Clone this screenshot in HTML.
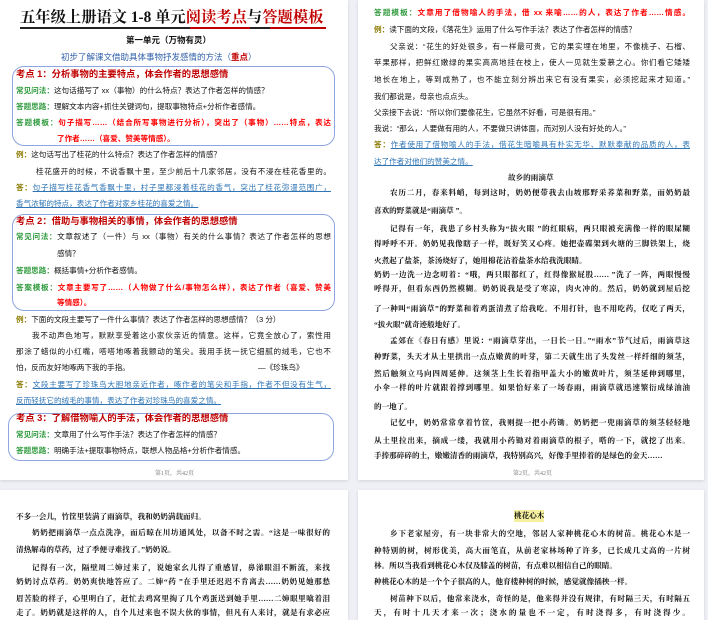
<!DOCTYPE html>
<html><head><meta charset="utf-8">
<style>
*{margin:0;padding:0;box-sizing:border-box}
body{width:708px;height:616px;background:#eef0f5;position:relative;overflow:hidden;font-family:"Liberation Sans","Noto Sans CJK SC",sans-serif;font-size:7.6px;color:#111}
.pg{position:absolute;background:#fff;box-shadow:0 1px 3px rgba(0,0,0,.12)}
.l{position:absolute;white-space:nowrap;line-height:12px;height:12px}
.j{text-align:justify;text-align-last:justify;overflow:hidden}
.g{color:#2e9a3c;font-weight:bold}
.r{color:#ff0000;font-weight:bold}
.dr{color:#c00000;font-weight:bold}
.b{color:#2f75b5;text-decoration:underline}
.y{color:#8a7a00;font-weight:bold}
.box{position:absolute;border:1px solid #8ea6e0;border-radius:12px}
.ft{position:absolute;font-size:6px;color:#777;font-family:"Liberation Serif","Noto Serif CJK SC",serif}
.k{font-family:"Liberation Serif","Noto Serif CJK SC",serif;font-weight:bold;font-size:7.6px}
.h{font-size:9.3px}
</style></head><body>
<div class="pg" style="left:0;top:0;width:348px;height:480px"></div>
<div class="pg" style="top:0;width:346px;height:480px;left:358px"></div>
<div class="pg" style="left:0;top:490px;width:348px;height:130px"></div>
<div class="pg" style="left:358px;top:490px;width:346px;height:130px"></div>

<!-- Page 1 -->
<div class="l" style="left:20px;top:8px;height:20px;line-height:20px;font-size:15.3px;font-weight:bold;font-family:'Liberation Serif','Noto Serif CJK SC',serif">五年级上册语文 1-8 单元<span style="color:#c00000">阅读考点</span>与<span style="color:#c00000">答题模板</span></div>
<div style="position:absolute;left:20px;top:27px;width:306px;height:2px;background:linear-gradient(90deg,#222 0 170px,#c00000 170px 230px,#222 230px 250px,#c00000 250px)"></div>
<div class="l" style="left:126px;top:34px;font-weight:bold;font-size:8.5px">第一单元（万物有灵）</div>
<div class="l" style="left:61px;top:51px;color:#2e5fa8;font-size:8.5px">初步了解课文借助具体事物抒发感情的方法（<span class="dr">重点</span>）</div>

<div class="box" style="left:12px;top:66px;width:323px;height:80px"></div>
<div class="l dr h" style="left:16px;top:68px">考点 1：分析事物的主要特点，体会作者的思想感情</div>
<div class="l" style="left:16px;top:85px"><span class="g">常见问法：</span>这句话描写了 xx（事物）的什么特点？表达了作者怎样的情感？</div>
<div class="l" style="left:16px;top:101px"><span class="g">答题思路：</span>理解文本内容+抓住关键词句，提取事物特点+分析作者感情。</div>
<div class="l j" style="left:16px;top:117px;width:315px"><span class="g">答题模板：</span><span class="r">句子描写……（结合所写事物进行分析），突出了（事物）……特点，表达</span></div>
<div class="l r" style="left:57px;top:133px">了作者……（喜爱、赞美等情感）。</div>

<div class="l" style="left:16px;top:149px"><span class="y">例：</span>这句话写出了桂花的什么特点？表达了作者怎样的情感？</div>
<div class="l j" style="left:36px;top:166px;width:295px">桂花盛开的时候，不说香飘十里，至少前后十几家邻居，没有不浸在桂花香里的。</div>
<div class="l j" style="left:16px;top:182px;width:315px"><span class="y">答：</span><span class="b">句子描写桂花香气香飘十里，村子里都浸着桂花的香气，突出了桂花弥漫范围广，</span></div>
<div class="l b" style="left:16px;top:198px">香气浓郁的特点，表达了作者对家乡桂花的喜爱之情。</div>

<div class="box" style="left:12px;top:214px;width:323px;height:97px"></div>
<div class="l dr h" style="left:16px;top:215px">考点 2：借助与事物相关的事情，体会作者的思想感情</div>
<div class="l j" style="left:16px;top:231px;width:315px"><span class="g">常见问法：</span>文章叙述了（一件）与 xx（事物）有关的什么事情？表达了作者怎样的思想</div>
<div class="l" style="left:57px;top:248px">感情？</div>
<div class="l" style="left:16px;top:265px"><span class="g">答题思路：</span>概括事情+分析作者感情。</div>
<div class="l j" style="left:16px;top:282px;width:315px"><span class="g">答案模板：</span><span class="r">文章主要写了……（人物做了什么/事物怎么样），表达了作者（喜爱、赞美</span></div>
<div class="l r" style="left:57px;top:297px">等情感）。</div>

<div class="l" style="left:16px;top:314px"><span class="y">例：</span>下面的文段主要写了一件什么事情？表达了作者怎样的思想感情？（3 分）</div>
<div class="l j" style="left:32px;top:330px;width:299px">我不动声色地写，默默享受着这小家伙亲近的情意。这样，它竟全放心了，索性用</div>
<div class="l j" style="left:16px;top:346px;width:315px">那涂了蜡似的小红嘴，嗒嗒地啄着我颤动的笔尖。我用手抚一抚它细腻的绒毛，它也不</div>
<div class="l" style="left:16px;top:362px">怕，反而友好地啄两下我的手指。</div>
<div class="l" style="left:258px;top:362px">—《珍珠鸟》</div>
<div class="l j" style="left:16px;top:379px;width:315px"><span class="y">答：</span><span class="b">文段主要写了珍珠鸟大胆地亲近作者，啄作者的笔尖和手指，作者不但没有生气，</span></div>
<div class="l b" style="left:16px;top:395px">反而轻抚它的绒毛的事情，表达了作者对珍珠鸟的喜爱之情。</div>

<div class="box" style="left:8px;top:413px;width:326px;height:48px"></div>
<div class="l dr h" style="left:16px;top:412px">考点 3：了解借物喻人的手法，体会作者的思想感情</div>
<div class="l" style="left:16px;top:429px"><span class="g">常见问法：</span>文章用了什么写作手法？表达了作者怎样的情感？</div>
<div class="l" style="left:16px;top:445px"><span class="g">答题思路：</span>明确手法+提取事物特点，联想人物品格+分析作者情感。</div>
<div class="ft" style="left:155px;top:468px">第1页，共42页</div>

<!-- Page 2 -->
<div class="l j" style="left:374px;top:7px;width:316px"><span class="g">答题模板：</span><span class="r">文章用了借物喻人的手法，借 xx 来喻……的人，表达了作者……情感。</span></div>
<div class="l" style="left:374px;top:24px"><span class="y">例：</span>读下面的文段，《落花生》运用了什么写作手法？表达了作者怎样的情感？</div>
<div class="l j" style="left:390px;top:41px;width:300px">父亲说：“花生的好处很多，有一样最可贵，它的果实埋在地里，不像桃子、石榴、</div>
<div class="l j" style="left:374px;top:57px;width:316px">苹果那样，把鲜红嫩绿的果实高高地挂在枝上，使人一见就生爱慕之心。你们看它矮矮</div>
<div class="l j" style="left:374px;top:74px;width:316px">地长在地上，等到成熟了，也不能立刻分辨出来它有没有果实，必须挖起来才知道。”</div>
<div class="l" style="left:374px;top:91px">我们都说是，母亲也点点头。</div>
<div class="l" style="left:374px;top:107px">父亲接下去说：“所以你们要像花生，它虽然不好看，可是很有用。”</div>
<div class="l" style="left:374px;top:123px">我说：“那么，人要做有用的人，不要做只讲体面，而对别人没有好处的人。”</div>
<div class="l j" style="left:374px;top:139px;width:316px"><span class="y">答：</span><span class="b">作者使用了借物喻人的手法，借花生暗喻具有朴实无华、默默奉献的品质的人，表</span></div>
<div class="l b" style="left:374px;top:156px">达了作者对他们的赞美之情。</div>

<div class="l k" style="left:508px;top:172px">故乡的雨滴草</div>
<div class="l k j" style="left:390px;top:187px;width:300px">农历二月，春来料峭，每到这时，奶奶便带我去山坡邢野采荞菜和野菜，而奶奶最</div>
<div class="l k" style="left:374px;top:205px">喜欢的野菜就是“雨滴草 ”。</div>
<div class="l k j" style="left:390px;top:223px;width:300px">记得有一年，我患了乡村头称为“拔火眼 ”的红眼病，两只眼被充满像一样的眼屎糊</div>
<div class="l k j" style="left:374px;top:238px;width:316px">得呼呼不开。奶奶见我像瞎子一样，既好笑又心疼。她把壶碟架到火塘的三脚铁架上，烧</div>
<div class="l k" style="left:374px;top:255px">火煮起了盐茶，茶汤烧好了，她用棉花沾着盐茶水给我洗眼睛。</div>
<div class="l k j" style="left:374px;top:269px;width:316px">奶奶一边洗一边念叨着：“哦，两只眼都红了，红得像猴屁股…… ”洗了一阵，两眼慢慢</div>
<div class="l k j" style="left:374px;top:283px;width:316px">呼得开，但看东西仍然模糊。奶奶说我是受了寒凉，肉火冲的。然后，奶奶就到屋后挖</div>
<div class="l k j" style="left:374px;top:303px;width:316px">了一种叫“雨滴草”的野菜和着鸡蛋清煮了给我吃。不用打针，也不用吃药，仅吃了两天，</div>
<div class="l k" style="left:374px;top:319px">“拔火眼”就奇迹般地好了。</div>
<div class="l k j" style="left:390px;top:335px;width:300px">孟郊在《春日有感》里说：“雨滴草芽出，一日长一日。”“雨水”节气过后，雨滴草这</div>
<div class="l k j" style="left:374px;top:351px;width:316px">种野菜，头天才从土里拱出一点点嫩黄的叶芽，第二天就生出了头发丝一样纤细的须茎，</div>
<div class="l k j" style="left:374px;top:368px;width:316px">然后触须立马向四周延伸。这须茎上生长着指甲盖大小的嫩黄叶片，须茎延伸到哪里，</div>
<div class="l k j" style="left:374px;top:382px;width:316px">小伞一样的叶片就跟着撑到哪里。如果恰好来了一场春雨，雨滴草就迅速繁衍成绿油油</div>
<div class="l k" style="left:374px;top:401px">的一地了。</div>
<div class="l k j" style="left:390px;top:417px;width:300px">记忆中，奶奶常常拿着竹筐，我则提一把小药锄。奶奶把一兜雨滴草的须茎轻轻地</div>
<div class="l k j" style="left:374px;top:435px;width:316px">从土里拉出来，摘成一缕，我就用小药锄对着雨滴草的根子，嗒的一下，就挖了出来。</div>
<div class="l k" style="left:374px;top:450px">手捧那碎碎的土，嫩嫩清香的雨滴草，我特别高兴，好像手里捧着的是绿色的金天……</div>
<div class="ft" style="left:513px;top:468px">第2页，共42页</div>

<!-- Page 3 -->
<div class="l k" style="left:16px;top:511px">不多一会儿，竹筐里装满了雨滴草，我和奶奶满载而归。</div>
<div class="l k j" style="left:32px;top:527px;width:298px">奶奶把雨滴草一点点洗净，而后晾在川坊通风处，以备不时之需。“这是一味很好的</div>
<div class="l k" style="left:16px;top:544px">清热解毒的草药，过了季便寻难找了。”奶奶说。</div>
<div class="l k j" style="left:32px;top:562px;width:298px">记得有一次，隔壁周二婶过来了，说她家幺儿得了重感冒，鼻涕眼泪不断流，来找</div>
<div class="l k j" style="left:16px;top:576px;width:314px">奶奶讨点草药。奶奶爽快地答应了。二婶“药 ”在手里还迟迟不肯离去……奶奶见她那愁</div>
<div class="l k j" style="left:16px;top:593px;width:314px">眉苦脸的样子，心里明白了，赶忙去鸡窝里掏了几个鸡蛋送到她手里……二婶眼里噙着泪</div>
<div class="l k j" style="left:16px;top:607px;width:314px">走了。奶奶就是这样的人，自个儿过来也不误大伙的事情，但凡有人来讨，就是有求必应</div>

<!-- Page 4 -->
<div class="l k" style="left:514px;top:510px;background:#f5f0a0">桃花心木</div>
<div class="l k j" style="left:390px;top:528px;width:300px">乡下老家屋旁，有一块非常大的空地，邻居人家种桃花心木的树苗。桃花心木是一</div>
<div class="l k j" style="left:374px;top:545px;width:316px">种特别的树，树形优美，高大而笔直，从前老家林场种了许多，已长成几丈高的一片树</div>
<div class="l k" style="left:374px;top:560px">林。所以当我看到桃花心木仅及膝盖的树苗，有点难以相信自己的眼睛。</div>
<div class="l k" style="left:374px;top:576px">种桃花心木的是一个个子很高的人，他育楼种树的时候，感觉就像插秧一样。</div>
<div class="l k j" style="left:390px;top:593px;width:300px">树苗种下以后，他常来浇水，奇怪的是，他来得并没有规律，有时隔三天，有时隔五</div>
<div class="l k j" style="left:374px;top:607px;width:316px">天，有时十几天才来一次；浇水的量也不一定，有时浇得多，有时浇得少。</div>
</body></html>
